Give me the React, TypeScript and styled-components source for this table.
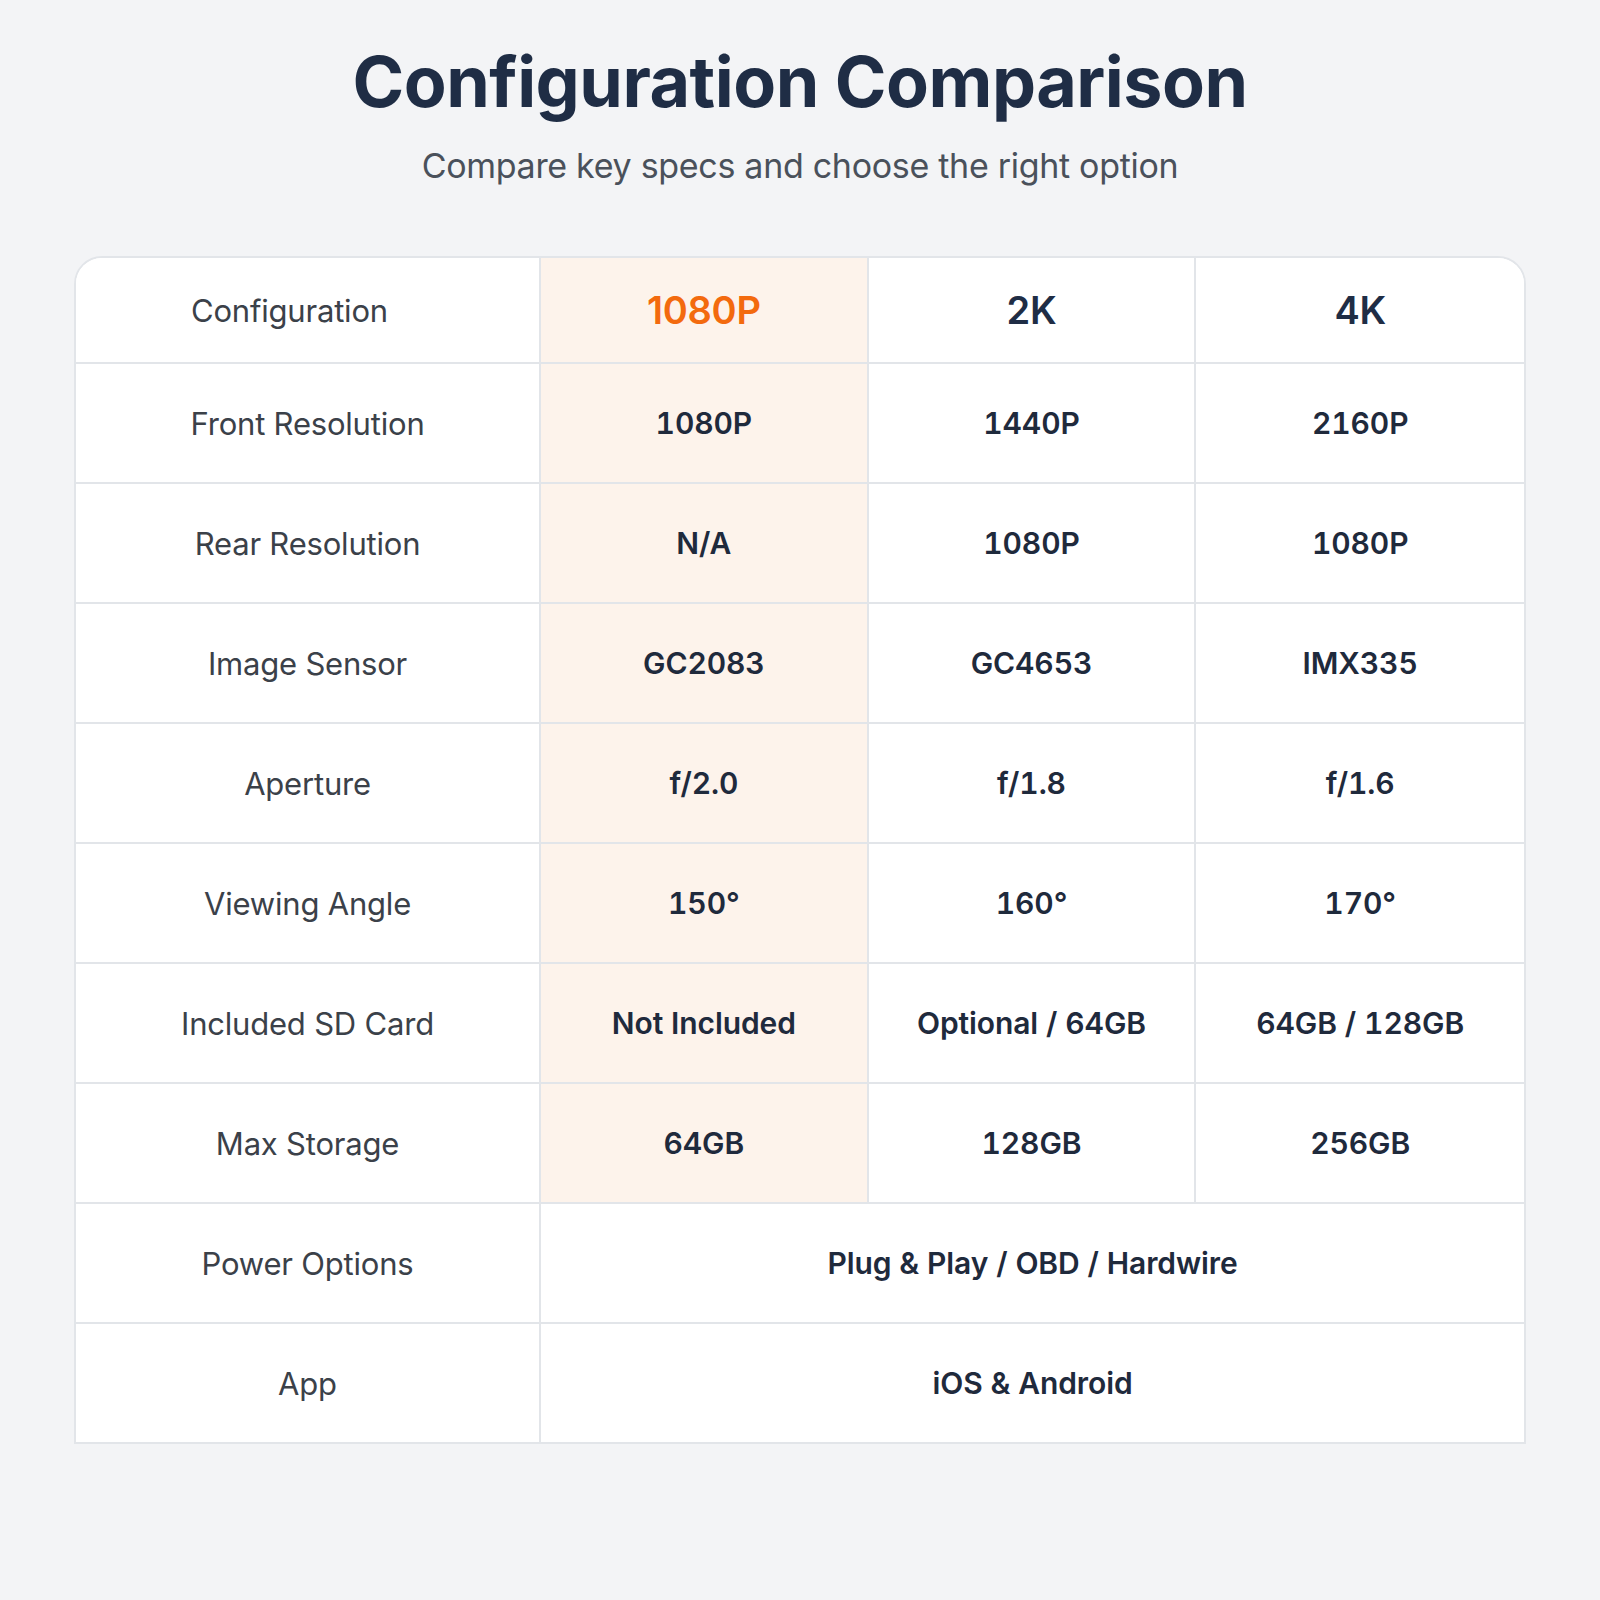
import React from "react";
import styled, { createGlobalStyle } from "styled-components";

const GlobalStyle = createGlobalStyle`
  html, body {
    margin: 0;
    padding: 0;
    background: #f3f4f6;
  }
  body {
    font-family: Inter, "Noto Sans", "Liberation Sans", sans-serif;
  }
`;

const Page = styled.div`
  width: 1600px;
  min-height: 1600px;
  background: #f3f4f6;
  display: flex;
  flex-direction: column;
  align-items: center;
  box-sizing: border-box;
  padding-top: 47px;
`;

const Title = styled.h1`
  margin: 0;
  font-size: 70px;
  line-height: 70px;
  font-weight: 700;
  color: #1f2d45;
  letter-spacing: -0.5px;
`;

const Subtitle = styled.p`
  margin: 29px 0 0;
  font-size: 34px;
  line-height: 40px;
  font-weight: 400;
  color: #4a515b;
  letter-spacing: -0.3px;
`;

const Table = styled.div`
  margin-top: 70px;
  width: 1452px;
  display: grid;
  grid-template-columns: 465px repeat(3, 1fr);
  background: #ffffff;
  border: 2px solid #e2e5e9;
  border-radius: 28px 28px 0 0;
  overflow: hidden;
  box-sizing: border-box;
`;

const Cell = styled.div<{ $tint?: boolean; $span?: number; $head?: boolean; $last?: boolean; $lastRow?: boolean }>`
  height: ${(p) => (p.$head ? "104px" : "118px")};
  display: flex;
  align-items: center;
  justify-content: center;
  background: ${(p) => (p.$tint ? "#fdf3eb" : "#ffffff")};
  border-right: ${(p) => (p.$last ? "none" : "2px solid #e2e5e9")};
  border-bottom: ${(p) => (p.$lastRow ? "none" : "2px solid #e2e5e9")};
  grid-column: ${(p) => (p.$span ? `span ${p.$span}` : "auto")};
`;

const LabelCell = styled(Cell)<{ $left?: boolean }>`
  justify-content: ${(p) => (p.$left ? "flex-start" : "center")};
  padding-left: ${(p) => (p.$left ? "115px" : "0")};
`;

const Label = styled.span`
  font-size: 31px;
  font-weight: 400;
  color: #3b4149;
  letter-spacing: -0.2px;
`;

const HeadValue = styled.span<{ $accent?: boolean }>`
  font-size: 38px;
  font-weight: 600;
  color: ${(p) => (p.$accent ? "#f36a0e" : "#1f2d45")};
  letter-spacing: -0.3px;
`;

const Value = styled.span`
  font-size: 30px;
  font-weight: 600;
  color: #1f2a3c;
  letter-spacing: -0.1px;
  font-variant-numeric: tabular-nums;
`;

type Row = { label: string; values: string[] } | { label: string; span: string };

const rows: Row[] = [
  { label: "Front Resolution", values: ["1080P", "1440P", "2160P"] },
  { label: "Rear Resolution", values: ["N/A", "1080P", "1080P"] },
  { label: "Image Sensor", values: ["GC2083", "GC4653", "IMX335"] },
  { label: "Aperture", values: ["f/2.0", "f/1.8", "f/1.6"] },
  { label: "Viewing Angle", values: ["150°", "160°", "170°"] },
  { label: "Included SD Card", values: ["Not Included", "Optional / 64GB", "64GB / 128GB"] },
  { label: "Max Storage", values: ["64GB", "128GB", "256GB"] },
  { label: "Power Options", span: "Plug & Play / OBD / Hardwire" },
  { label: "App", span: "iOS & Android" },
];

const headers = ["1080P", "2K", "4K"];

export default function App() {
  return (
    <>
      <GlobalStyle />
      <Page>
        <Title>Configuration Comparison</Title>
        <Subtitle>Compare key specs and choose the right option</Subtitle>
        <Table>
          <LabelCell $head $left>
            <Label>Configuration</Label>
          </LabelCell>
          {headers.map((h, i) => (
            <Cell key={h} $head $tint={i === 0} $last={i === 2}>
              <HeadValue $accent={i === 0}>{h}</HeadValue>
            </Cell>
          ))}
          {rows.map((r, ri) => {
            const lastRow = ri === rows.length - 1;
            return (
              <React.Fragment key={r.label}>
                <LabelCell $lastRow={lastRow}>
                  <Label>{r.label}</Label>
                </LabelCell>
                {"span" in r ? (
                  <Cell $span={3} $last $lastRow={lastRow}>
                    <Value>{r.span}</Value>
                  </Cell>
                ) : (
                  r.values.map((v, i) => (
                    <Cell key={i} $tint={i === 0} $last={i === 2} $lastRow={lastRow}>
                      <Value>{v}</Value>
                    </Cell>
                  ))
                )}
              </React.Fragment>
            );
          })}
        </Table>
      </Page>
    </>
  );
}
